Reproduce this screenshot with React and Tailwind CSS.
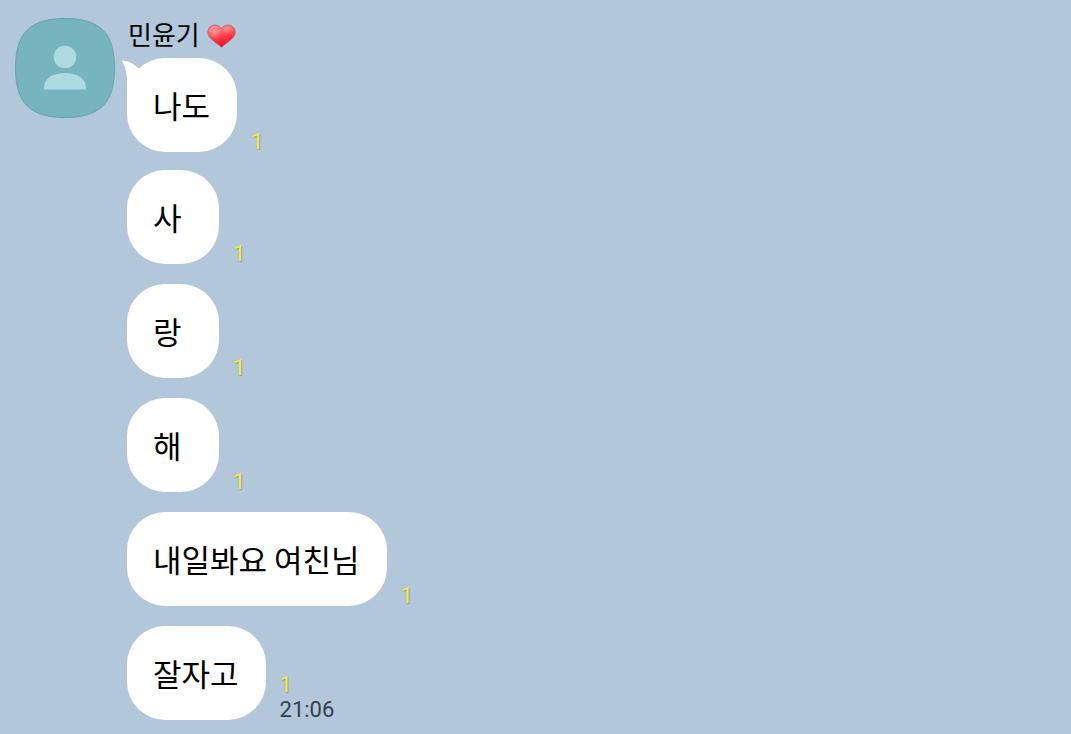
import React from "react";

const messages = [
    { id: 1, text: "나도", unread: 1 },
    { id: 2, text: "사", unread: 1 },
    { id: 3, text: "랑", unread: 1 },
    { id: 4, text: "해", unread: 1 },
    { id: 5, text: "내일봐요 여친님", unread: 1 },
    { id: 6, text: "잘자고", unread: 1, time: "21:06" },
];

// 기본 프로필 이미지
const Avatar = () => (
    <svg viewBox="0 0 100 100" className="w-25 h-25 shrink-0" aria-hidden="true">
        <path
            d="M50 .5C85 .5 99.5 15 99.5 50S85 99.5 50 99.5S.5 85 .5 50S15 .5 50 .5Z"
            fill="#76b4be"
            stroke="#68a3ae"
            strokeWidth="1"
        />
        <circle cx="50" cy="39" r="11.3" fill="#aedbe1" />
        <path d="M29 71.500V69.5C29 60 38.500 55 50 55S71 60 71 69.500V71.500Z" fill="#aedbe1" />
    </svg>
);

const Heart = () => (
    <svg viewBox="0 0 30 24" className="w-[29px] h-6" role="img" aria-label="하트">
        <defs>
            <linearGradient id="heartFill" x1="0.3" y1="0" x2="0.6" y2="1">
                <stop offset="0" stopColor="#f58a8c" />
                <stop offset="0.35" stopColor="#fb5f64" />
                <stop offset="0.7" stopColor="#fa2638" />
                <stop offset="1" stopColor="#e8122a" />
            </linearGradient>
            <radialGradient id="heartShine">
                <stop offset="0" stopColor="#ffc9c6" stopOpacity="0.45" />
                <stop offset="1" stopColor="#ffb0aa" stopOpacity="0" />
            </radialGradient>
        </defs>
        <path
            d="M15 4.500C12.500 0 6.500-.3 3.200 2.800C.3 5.600.2 9.700 2.500 12.800C5.600 17 10.700 19.500 15 23.500C19.300 19.500 24.400 17 27.500 12.800C29.800 9.700 29.700 5.600 26.800 2.800C23.500-.3 17.500 0 15 4.500Z"
            fill="url(#heartFill)"
            stroke="#b9505c"
            strokeWidth="0.8"
        />
        <ellipse cx="8" cy="8" rx="7" ry="7" fill="url(#heartShine)" />
        <ellipse cx="21" cy="5" rx="6" ry="4" fill="url(#heartShine)" />
    </svg>
);

// 첫 번째 말풍선의 꼬리
const Tail = () => (
    <svg viewBox="0 0 24 34" className="absolute -left-[5px] top-[2px] w-6 h-[34px]" aria-hidden="true">
        <path d="M0 1.500C0 .6.700.3 1.600.6C7 1.500 12 4 16 8L24 12L12 34H5V22C5 13 3.500 7 0 1.500Z" fill="#fff" />
    </svg>
);

const Message = ({ message, isFirst }) => (
    <li className="mb-5 flex items-end gap-[14px] first:mb-[18px] last:mb-0">
        <p className="relative min-w-23 rounded-[38px] bg-white pl-[26px] pr-[27px] py-6 text-[31px] leading-[46px] text-black">
            {isFirst && <Tail />}
            <span className="relative">{message.text}</span>
        </p>
        <div className="flex flex-col gap-[5px] font-[Roboto,'Noto_Sans_CJK_KR',sans-serif] text-[22px] leading-5">
            <span className="text-[#f5e850] [text-shadow:1px_1px_1px_rgba(110,110,60,0.5)]">{message.unread}</span>
            {message.time && <time className="text-[#35404c]">{message.time}</time>}
        </div>
    </li>
);

const App = () => {
    return (
        <main className="min-h-screen bg-[#b2c7da] pl-[15px] pr-4 pt-[18px] pb-3 font-['Noto_Sans_CJK_KR',sans-serif]">
            <section className="flex items-start gap-3">
                <Avatar />
                <div className="min-w-0">
                    <h1 className="flex h-10 items-start gap-[7px] pl-px text-[26px] leading-8 text-black">
                        민윤기
                        <span className="pt-[6px]">
                            <Heart />
                        </span>
                    </h1>
                    <ul>
                        {messages.map((message, index) => (
                            <Message key={message.id} message={message} isFirst={index === 0} />
                        ))}
                    </ul>
                </div>
            </section>
        </main>
    );
};

export default App;
